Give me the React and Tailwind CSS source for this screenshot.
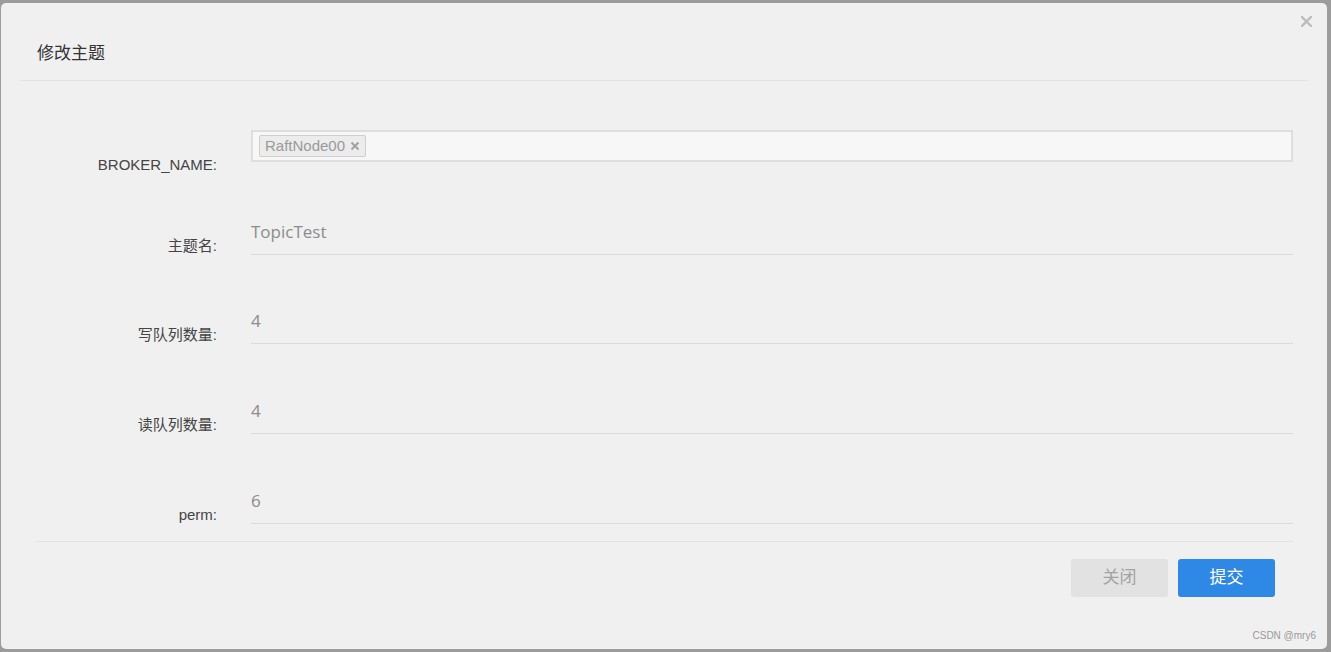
import React from 'react';

const labelCls = "w-[216px] shrink-0 text-right text-[15px] leading-[16px] text-[#444]";

const LineField = ({ label, value, className }) => (
    <div className={`flex items-end ${className}`}>
        <label className={`${labelCls} mb-[1px]`}>{label}</label>
        <div className="ml-[34px] flex-1 h-[44px] border-b border-[#dcdcdc] pt-[11px]">
            <span className="block leading-[20px] text-[17px] text-[#8c8c8c]" style={{ fontFamily: '"Open Sans", sans-serif' }}>{value}</span>
        </div>
    </div>
);

const App = () => {
    return (
        <div className="w-[1331px] h-[652px] bg-[#9c9c9c] pt-[3px] pl-[1px] overflow-hidden" style={{ fontFamily: '"Liberation Sans", Arial, "Noto Sans CJK SC", sans-serif' }}>
            <div className="relative w-[1326px] h-[646px] bg-[#f0f0f0] rounded-[5px]">
                {/* header */}
                <div className="mx-[19px] h-[78px] border-b border-[#e3e3e3] flex items-center pl-[17px] pt-[24px]">
                    <h1 className="text-[17px] text-[#333]">修改主题</h1>
                </div>
                <button className="absolute top-[10px] right-[13px] w-[16px] h-[16px] flex items-center justify-center">
                    <svg width="11" height="11" viewBox="0 0 11 11">
                        <path d="M1 1L10 10M10 1L1 10" stroke="#bdbdbd" strokeWidth="2.4" strokeLinecap="square" />
                    </svg>
                </button>

                {/* body */}
                <div className="pr-[34px] pt-[49px]">
                    <div className="flex items-start">
                        <label className={`${labelCls} mt-[27px]`}>BROKER_NAME:</label>
                        <div className="ml-[34px] flex-1 h-[32px] border-2 border-[#dedede] bg-[#f7f7f7] flex items-center pl-[6px]">
                            <span className="flex items-center h-[22px] px-[5px] border border-[#cfcfcf] rounded-[2px] bg-[#ececec] text-[15px] text-[#9a9a9a]">
                                RaftNode00
                                <svg className="ml-[5px]" width="10" height="10" viewBox="0 0 10 10">
                                    <path d="M1.5 1.5L8.5 8.5M8.5 1.5L1.5 8.5" stroke="#a0a0a0" strokeWidth="1.9" />
                                </svg>
                            </span>
                        </div>
                    </div>
                    <LineField className="mt-[38px]" label="主题名:" value="TopicTest" />
                    <LineField className="mt-[45px]" label="写队列数量:" value="4" />
                    <LineField className="mt-[46px]" label="读队列数量:" value="4" />
                    <LineField className="mt-[46px]" label="perm:" value="6" />
                </div>

                {/* footer */}
                <div className="ml-[35px] mr-[34px] mt-[17px] border-t border-[#e3e3e3]"></div>
                <div className="flex justify-end gap-[10px] pr-[52px] pt-[17px]">
                    <button className="w-[97px] h-[38px] rounded-[3px] bg-[#e2e2e2] text-[17px] text-[#a3a3a3]">关闭</button>
                    <button className="w-[97px] h-[38px] rounded-[3px] bg-[#2e88e6] text-[17px] text-white">提交</button>
                </div>

                <span className="absolute right-[11px] bottom-[6px] text-[10px] text-[#9a9a9a]">CSDN @mry6</span>
            </div>
        </div>
    );
};

export default App;
